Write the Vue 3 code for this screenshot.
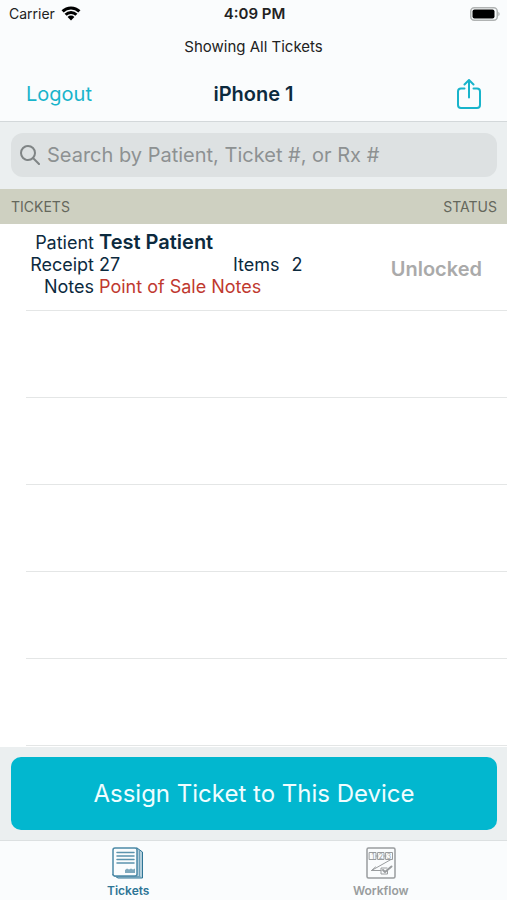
<script setup>
import { ref } from 'vue'

const query = ref('')
const activeTab = ref('tickets')
const tickets = [
  { patient: 'Test Patient', receipt: 27, items: 2, notes: 'Point of Sale Notes', status: 'Unlocked' },
]
const emptyRows = 5
</script>

<template>
  <div class="screen">
    <header class="top">
      <div class="status-bar">
        <div class="carrier">
          <span>Carrier</span>
          <svg class="wifi" viewBox="0 0 20 15" aria-hidden="true">
            <path d="M1.600 5.400a11.900 11.900 0 0 1 16.800 0" />
            <path d="M4.600 8.800a7.600 7.600 0 0 1 10.800 0" />
            <path class="dot" d="M6.600 11a4.800 4.800 0 0 1 6.800 0L10 14.500z" />
          </svg>
        </div>
        <time class="clock">4:09 PM</time>
        <svg class="battery" viewBox="0 0 30 14" aria-hidden="true">
          <rect class="shell" x="0.75" y="0.75" width="26.5" height="12.5" rx="3.5" />
          <rect class="charge" x="2.5" y="2.5" width="22" height="9" rx="2" />
          <path class="tip" d="M28.4 4.8c1.6.7 1.6 3.7 0 4.4z" />
        </svg>
      </div>
      <p class="filter">Showing All Tickets</p>
      <nav class="nav">
        <button class="logout" type="button">Logout</button>
        <h1>iPhone 1</h1>
        <button class="share" type="button" aria-label="Share">
          <svg viewBox="0 0 24 30" aria-hidden="true">
            <path d="M7.5 9.500H4a3 3 0 0 0-3 3V26a3 3 0 0 0 3 3H20a3 3 0 0 0 3-3V12.500a3 3 0 0 0-3-3H16.500" />
            <path d="M12 18.500V1M7.500 5.500L12 1l4.500 4.500" />
          </svg>
        </button>
      </nav>
    </header>

    <div class="search">
      <label class="field">
        <svg viewBox="0 0 20 20" aria-hidden="true">
          <circle cx="8" cy="8" r="7" />
          <path d="M13 13l6 6" />
        </svg>
        <input v-model="query" type="search" aria-label="Search tickets" placeholder="Search by Patient, Ticket #, or Rx #" />
      </label>
    </div>

    <main class="list">
      <table>
        <thead>
          <tr>
            <th scope="col">TICKETS</th>
            <th scope="col" class="end">STATUS</th>
          </tr>
        </thead>
        <tbody>
          <tr v-for="ticket in tickets" :key="ticket.receipt">
            <td class="inset">
              <div class="cell">
                <dl>
                  <dt>Patient</dt>
                  <dd class="name">{{ ticket.patient }}</dd>
                  <dt>Receipt</dt>
                  <dd>{{ ticket.receipt }}</dd>
                  <dt>Items</dt>
                  <dd class="count">{{ ticket.items }}</dd>
                  <dt>Notes</dt>
                  <dd class="notes">{{ ticket.notes }}</dd>
                </dl>
              </div>
            </td>
            <td><div class="cell state">{{ ticket.status }}</div></td>
          </tr>
          <tr v-for="row in emptyRows" :key="'empty-' + row">
            <td class="inset"><div class="cell"></div></td>
            <td><div class="cell"></div></td>
          </tr>
        </tbody>
      </table>
    </main>

    <div class="action">
      <button type="button">Assign Ticket to This Device</button>
    </div>

    <nav class="tabs">
      <button type="button" :class="{ active: activeTab === 'tickets' }" @click="activeTab = 'tickets'">
        <svg viewBox="0 0 32 32" aria-hidden="true">
          <path class="side" d="M25 1l5.500 4V31H6l-5-3z" />
          <path class="edge" d="M27.500 3.500v26M3 29.500h25" />
          <rect class="sheet" x="1" y="1" width="24" height="28" rx="2" />
          <path class="line" d="M5 5.500h17M5 9h17M5 12.500h17M5 16h17" />
          <path class="stamp" d="M13 23l2-1.500 2 1 2-1 2 1 2-1V26H13z" />
        </svg>
        <span>Tickets</span>
      </button>
      <button type="button" :class="{ active: activeTab === 'workflow' }" @click="activeTab = 'workflow'">
        <svg viewBox="0 0 32 32" aria-hidden="true">
          <rect class="frame" x="2" y="1" width="28" height="30" rx="1.500" />
          <path d="M4.500 5.500h6.500v7H4.500zM13 5.500h6v7h-6zM21 5.500h6.500v7H21zM11 9h2M19 9h2" />
          <path d="M26 12.500L6.500 23.500H16M6.500 23.500l4-3.500M22 21h-6v6h6.500v-3" />
          <path class="check" d="M18 23l2 2 6.500-5.500" />
          <text x="8" y="11.500">1</text>
          <text x="16" y="11.500">2</text>
          <text x="24" y="11.500">3</text>
        </svg>
        <span>Workflow</span>
      </button>
    </nav>
  </div>
</template>

<style>
body {
  background: #fff;
}
</style>

<style scoped>
.screen {
  display: flex;
  flex-direction: column;
  min-height: 100vh;
  font-family: Inter, "Liberation Sans", sans-serif;
  color: #0c2a3e;
}

button {
  padding: 0;
  border: 0;
  background: none;
  font: inherit;
  cursor: pointer;
}

svg {
  display: block;
  flex: none;
  fill: none;
  stroke-linecap: round;
  stroke-linejoin: round;
}

.top {
  background: #fafcfd;
  border-bottom: 1px solid #d3d8da;
}

.status-bar {
  display: grid;
  grid-template-columns: 1fr auto 1fr;
  align-items: center;
  height: 27px;
  padding: 0 7px 0 9px;
  font-size: 14px;
  color: #222;
}

.carrier {
  display: flex;
  align-items: center;
  gap: 6px;
}

.wifi {
  width: 20px;
  height: 15px;
  stroke: #000;
  stroke-width: 3;
  stroke-linecap: butt;
}

.wifi .dot {
  fill: #000;
  stroke: none;
}

.clock {
  font-size: 15px;
  font-weight: 600;
}

.battery {
  justify-self: end;
  width: 30px;
  height: 14px;
}

.shell {
  stroke: #b0b3b3;
  stroke-width: 1.5;
}

.charge {
  fill: #000;
}

.tip {
  fill: #a5a8a8;
}

.filter {
  margin: 0;
  font-size: 15px;
  line-height: 39px;
  text-align: center;
  color: #222;
}

.nav {
  display: grid;
  grid-template-columns: 1fr auto 1fr;
  align-items: center;
  height: 55px;
  padding: 0 26px;
}

.logout {
  justify-self: start;
  font-size: 20px;
  color: #18b4cb;
}

h1 {
  margin: 0;
  font-size: 20px;
  font-weight: 600;
}

.share {
  justify-self: end;
}

.share svg {
  width: 24px;
  height: 30px;
  stroke: #18b4cb;
  stroke-width: 2;
}

.search {
  padding: 11px 10px 12px 11px;
  background: #ebeff0;
}

.field {
  display: flex;
  align-items: center;
  gap: 7px;
  height: 44px;
  padding: 0 9px;
  border-radius: 12px;
  background: #dde1e2;
}

.field svg {
  width: 20px;
  height: 20px;
  stroke: #7f8485;
  stroke-width: 2;
}

input {
  flex: 1;
  min-width: 0;
  padding: 0;
  border: 0;
  outline: 0;
  background: none;
  appearance: none;
  font: inherit;
  font-size: 20px;
  color: #0c2a3e;
}

input::placeholder {
  color: #8d9192;
  opacity: 1;
}

.list {
  flex: 1;
}

table {
  width: 100%;
  border-collapse: collapse;
}

th {
  height: 35px;
  padding: 0 11px;
  background: #ced0c1;
  font-size: 14px;
  font-weight: 400;
  text-align: left;
  color: #64675c;
}

.end {
  padding-right: 10px;
  text-align: right;
}

td {
  padding: 0;
}

.inset {
  padding-left: 26px;
}

.cell {
  box-sizing: border-box;
  height: 87px;
  border-bottom: 1px solid #e4e6e6;
}

dl {
  display: grid;
  grid-template-columns: 68px 129px auto 1fr;
  column-gap: 5px;
  align-items: baseline;
  margin: 0;
  padding-top: 6px;
  font-size: 18px;
  line-height: 22px;
}

dt {
  text-align: right;
}

dd {
  margin: 0;
}

.name,
.notes {
  grid-column: 2 / -1;
}

.name {
  font-size: 20px;
  font-weight: 600;
  line-height: 24px;
}

.count {
  padding-left: 7px;
}

.notes {
  color: #c0392f;
}

.state {
  padding: 33px 25px 0 0;
  font-size: 20px;
  font-weight: 600;
  line-height: 24px;
  text-align: right;
  color: #aaa;
}

.action {
  padding: 10px 10px 10px 11px;
  background: #ebeff0;
}

.action button {
  display: block;
  width: 100%;
  height: 73px;
  border-radius: 10px;
  background: #02b7cf;
  font-size: 24px;
  color: #f0fdff;
}

.tabs {
  display: grid;
  grid-template-columns: 1fr 1fr;
  padding: 0 0 2px 2px;
  border-top: 1px solid #dce0e1;
  background: #fafcfd;
}

.tabs button {
  display: flex;
  flex-direction: column;
  align-items: center;
  gap: 4px;
  padding-top: 6px;
  font-size: 12px;
  font-weight: 600;
  line-height: 15px;
  color: #999c9e;
}

.tabs .active {
  color: #2e7596;
}

.tabs svg {
  width: 32px;
  height: 32px;
  stroke: currentColor;
  stroke-width: 1;
}

.tabs .side {
  fill: #b4cfdc;
}

.tabs .edge {
  stroke: #6d9fb7;
}

.tabs .sheet {
  fill: #fafcfd;
  stroke: #4c89a6;
  stroke-width: 1.5;
}

.tabs .line {
  stroke: #5b93ad;
  stroke-width: 1.5;
}

.tabs .stamp {
  fill: #7fa9bd;
  stroke: none;
}

.tabs .frame {
  stroke-width: 1.5;
}

.tabs .check {
  stroke-width: 2;
}

.tabs text {
  fill: currentColor;
  stroke: none;
  font-size: 7px;
  font-weight: 400;
  text-anchor: middle;
}
</style>
